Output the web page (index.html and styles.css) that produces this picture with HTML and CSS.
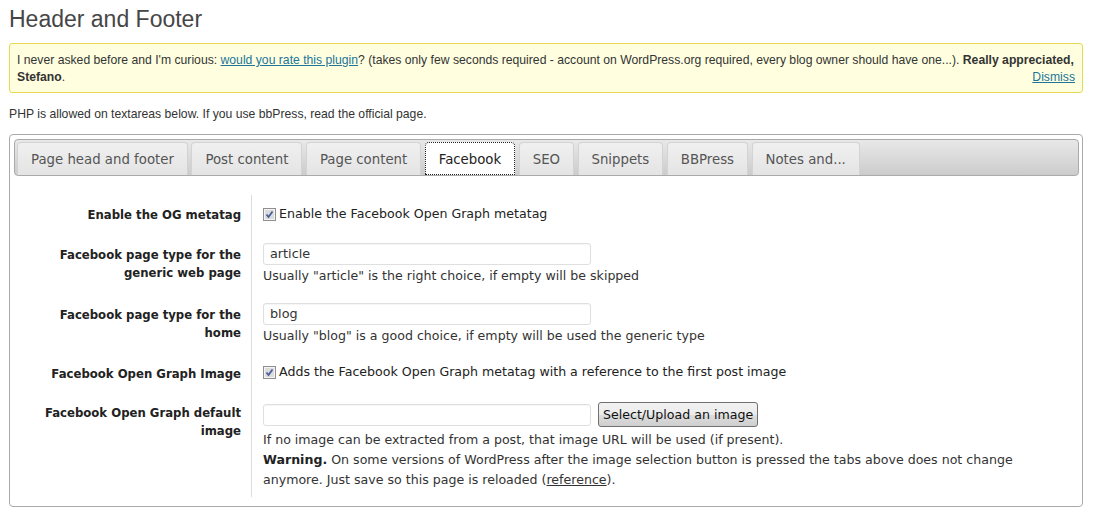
FILE: index.html
```html
<!DOCTYPE html>
<html>
<head>
<meta charset="utf-8">
<link rel="stylesheet" href="styles.css">
</head>
<body>
<div class="wrap">
  <h2 class="title">Header and Footer</h2>
  <div class="notice">
    <p>I never asked before and I'm curious: <a href="#" class="link">would you rate this plugin</a>? (takes only few seconds required - account on WordPress.org required, every blog owner should have one...). <strong>Really appreciated, Stefano</strong>. <a href="#" class="link dismiss">Dismiss</a></p>
  </div>
  <p class="intro">PHP is allowed on textareas below. If you use bbPress, read the official page.</p>

  <div class="tabs">
    <ul class="tabbar">
      <li class="tab">Page head and footer</li>
      <li class="tab">Post content</li>
      <li class="tab">Page content</li>
      <li class="tab active">Facebook</li>
      <li class="tab">SEO</li>
      <li class="tab">Snippets</li>
      <li class="tab">BBPress</li>
      <li class="tab">Notes and...</li>
    </ul>
    <div class="panel">
      <div class="form">
        <div class="label single">Enable the OG metatag</div>
        <div class="field check-row">
          <span class="cb"><svg width="13" height="13" viewBox="0 0 13 13"><rect x="0.5" y="0.5" width="12" height="12" fill="#f4f4f4" stroke="#8f8f8f"/><rect x="2" y="2" width="9" height="9" fill="#dcdcdc"/><path d="M3.5 6.5 L5.5 9 L9.5 3.5" fill="none" stroke="#4a5f9c" stroke-width="1.8"/></svg></span>
          <span>Enable the Facebook Open Graph metatag</span>
        </div>

        <div class="label">Facebook page type for the generic web page</div>
        <div class="field">
          <div class="input">article</div>
          <div class="help">Usually "article" is the right choice, if empty will be skipped</div>
        </div>

        <div class="label">Facebook page type for the home</div>
        <div class="field">
          <div class="input">blog</div>
          <div class="help">Usually "blog" is a good choice, if empty will be used the generic type</div>
        </div>

        <div class="label single second">Facebook Open Graph Image</div>
        <div class="field check-row">
          <span class="cb"><svg width="13" height="13" viewBox="0 0 13 13"><rect x="0.5" y="0.5" width="12" height="12" fill="#f4f4f4" stroke="#8f8f8f"/><rect x="2" y="2" width="9" height="9" fill="#dcdcdc"/><path d="M3.5 6.5 L5.5 9 L9.5 3.5" fill="none" stroke="#4a5f9c" stroke-width="1.8"/></svg></span>
          <span>Adds the Facebook Open Graph metatag with a reference to the first post image</span>
        </div>

        <div class="label">Facebook Open Graph default image</div>
        <div class="field last">
          <div class="upload-row">
            <div class="input"></div>
            <span class="button">Select/Upload an image</span>
          </div>
          <div class="help long">If no image can be extracted from a post, that image URL will be used (if present).<br>
          <strong>Warning.</strong> On some versions of WordPress after the image selection button is pressed the tabs above does not change anymore. Just save so this page is reloaded (<a href="#" class="ref">reference</a>).</div>
        </div>
      </div>
    </div>
  </div>
</div>
</body>
</html>
```
FILE: styles.css
```css
html, body {
  margin: 0;
  padding: 0;
  background: #fff;
}
.wrap {
  padding: 0 10px 0 9px;
  font-family: "Liberation Sans", Arial, sans-serif;
  font-size: 12.2px;
  color: #333;
}
.title {
  margin: 0;
  padding: 5px 0 0;
  font-size: 23px;
  font-weight: normal;
  line-height: 29px;
  color: #464646;
}
.notice {
  margin-top: 9px;
  background: #ffffe0;
  border: 1px solid #e6db55;
  border-radius: 3px;
  padding: 8px 7px 6px 7px;
  line-height: 17px;
}
.notice p {
  margin: 0;
}
.notice strong {
  color: #333;
}
.link {
  color: #21759b;
}
.dismiss {
  float: right;
}
.intro {
  margin: 14px 0 0;
  line-height: 15px;
  color: #333;
}
.tabs {
  margin-top: 12px;
  border: 1px solid #aaa;
  border-radius: 4px;
  padding: 4px 3px 9px 4px;
  font-family: "DejaVu Sans", Verdana, sans-serif;
  font-size: 12.6px;
}
.tabbar {
  list-style: none;
  margin: 0;
  padding: 2px 2px 0;
  display: flex;
  gap: 3.5px;
  height: 33px;
  border: 1px solid #aaa;
  border-radius: 4px;
  background: linear-gradient(#e8e8e8, #cccccc);
  font-size: 13.3px;
}
.tab {
  padding: 0 13px;
  height: 32px;
  line-height: 33px;
  background: linear-gradient(#f0f0f0, #e4e4e4);
  border: 1px solid #d3d3d3;
  border-bottom: 0;
  border-radius: 4px 4px 0 0;
  color: #555;
}
.tab.active {
  background: #fff;
  border: 1px dotted #222;
  color: #222;
  height: 33px;
  box-sizing: border-box;
}
.panel {
  padding: 19px 0 0 0;
}
.form {
  display: grid;
  grid-template-columns: 237px 1fr;
  color: #222;
}
.label {
  font-weight: bold;
  font-size: 11.7px;
  text-align: right;
  padding: 13px 10px 8px 24px;
  line-height: 18px;
  color: #222;
}
.label.single {
  padding-top: 11px;
}
.label.single.second {
  padding-top: 12px;
}
.field {
  border-left: 1px solid #dcdcdc;
  padding: 10px 0 8px 11px;
  line-height: 18px;
}
.check-row {
  display: flex;
  align-items: center;
  gap: 3px;
  height: 18px;
  padding-top: 10px;
  padding-bottom: 10px;
}
.cb {
  display: inline-block;
  width: 13px;
  height: 13px;
  line-height: 0;
}
.input {
  box-sizing: border-box;
  width: 328px;
  height: 22px;
  border: 1px solid #dfdfdf;
  border-radius: 3px;
  background: #fff;
  box-shadow: inset 0 1px 1px rgba(0,0,0,0.04);
  padding: 0 6px;
  line-height: 20px;
  color: #333;
  font-size: 12.8px;
}
.help {
  color: #333;
  margin-top: 2px;
}
.upload-row {
  display: flex;
  align-items: center;
  gap: 7px;
  height: 27px;
}
.button {
  display: inline-block;
  box-sizing: border-box;
  height: 25px;
  line-height: 23px;
  padding: 0 4px;
  border: 1px solid #707070;
  border-radius: 3px;
  background: linear-gradient(#f2f2f2 0%, #ebebeb 50%, #dddddd 51%, #cfcfcf 100%);
  color: #111;
}
.help.long {
  line-height: 20px;
  margin-top: 2px;
  max-width: 770px;
}
.help.long strong {
  color: #222;
}
.field.last {
  padding-bottom: 7px;
}
.ref {
  color: #333;
}
```
